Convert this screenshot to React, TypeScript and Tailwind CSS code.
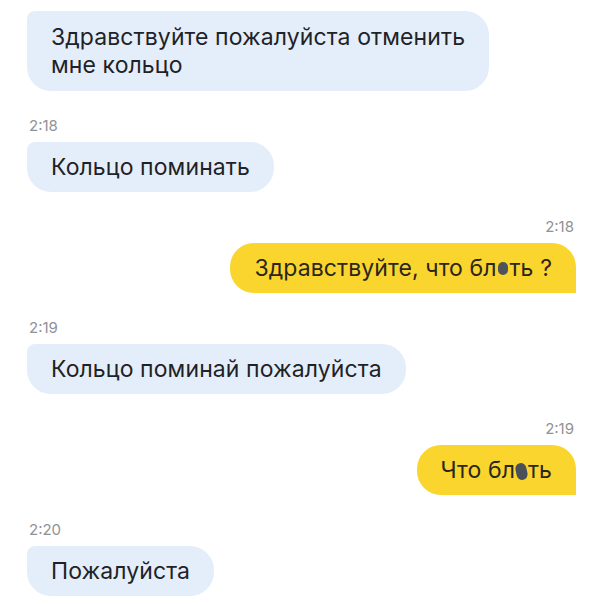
import React from 'react'

type Msg = {
  side: 'in' | 'out'
  time?: string
  text: React.ReactNode
}

// замазанная буква
function Blot({ big }: { big?: boolean }) {
  return (
    <span className="relative inline-block">
      <span className="text-transparent">я</span>
      <span
        className={
          big
            ? 'absolute left-[1px] top-[7px] w-[11px] h-[17px] rounded-full bg-[#4a5059] -rotate-12'
            : 'absolute left-[1px] top-[8px] w-[10px] h-[13px] rounded-full bg-[#4d545c]'
        }
      />
    </span>
  )
}

const messages: Msg[] = [
  { side: 'in', text: <>Здравствуйте пожалуйста отменить<br />мне кольцо</> },
  { side: 'in', time: '2:18', text: 'Кольцо поминать' },
  { side: 'out', time: '2:18', text: <>Здравствуйте, что бл<Blot />ть ?</> },
  { side: 'in', time: '2:19', text: 'Кольцо поминай пожалуйста' },
  { side: 'out', time: '2:19', text: <>Что бл<Blot big />ть</> },
  { side: 'in', time: '2:20', text: 'Пожалуйста' },
]

export default function App() {
  return (
    <div
      className="w-[603px] h-[604px] overflow-hidden bg-white pt-[11px] pl-[27px] pr-[27px]"
      style={{ fontFamily: 'Inter, Roboto, "Noto Sans", sans-serif' }}
    >
      {messages.map((m, i) => (
        <div
          key={i}
          className={
            'flex flex-col ' +
            (m.side === 'in' ? 'items-start ' : 'items-end ') +
            (i === 0 ? '' : 'mt-[27px]')
          }
        >
          {m.time && (
            <div className="h-4 leading-4 text-[15px] text-[#8f9296] mb-2 px-[2px]">{m.time}</div>
          )}
          <div
            className={
              (i === 0 ? 'py-3 ' : 'py-[11px] ') +
              (m.side === 'in'
                ? 'bg-[#e4eefa] rounded-[24px] rounded-tl-[8px] px-6 text-[23px] leading-[28px] tracking-[0.1px] text-[#1f2226]'
                : 'bg-[#fad52d] rounded-[24px] rounded-br-none px-6 text-[23px] leading-[28px] tracking-[0.1px] text-[#2a2620]')
            }
          >
            {m.text}
          </div>
        </div>
      ))}
    </div>
  )
}
